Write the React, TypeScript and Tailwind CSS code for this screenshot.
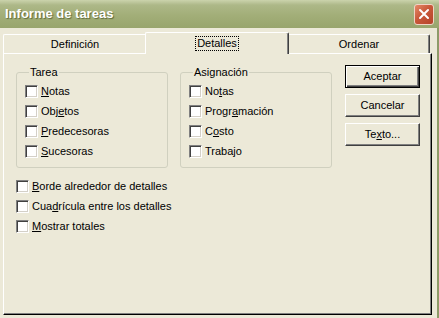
import React from 'react';

const font = "font-['Liberation_Sans',Tahoma,sans-serif]";

const Check: React.FC<{ children: React.ReactNode }> = ({ children }) => (
  <div className="flex h-[20px] items-center">
    <span className="box-border h-[13px] w-[13px] shrink-0 border border-t-[#808080] border-l-[#808080] border-r-white border-b-white bg-white shadow-[inset_1px_1px_0_#404040,inset_-1px_-1px_0_#d4d0c8]" />
    <span className="ml-[3px] text-[11px] leading-[13px] text-black">{children}</span>
  </div>
);

const Group: React.FC<{ title: string; children: React.ReactNode }> = ({ title, children }) => (
  <fieldset className="box-border h-[102px] w-[152px] rounded-[3px] border border-[#d0d0bf] pl-[8px] pt-[2px]">
    <legend className="ml-[4px] px-[1px] text-[11px] leading-[13px] text-black">{title}</legend>
    {children}
  </fieldset>
);

const Button: React.FC<{ children: React.ReactNode; primary?: boolean }> = ({ children, primary }) => (
  <div
    className={
      primary
        ? 'box-border flex h-[23px] w-[75px] items-center justify-center border border-black bg-[#ece9d8] text-[11px] shadow-[inset_1px_1px_0_#fff,inset_-1px_-1px_0_#404040,inset_-2px_-2px_0_#808080]'
        : 'box-border flex h-[23px] w-[75px] items-center justify-center border border-t-white border-l-white border-r-[#404040] border-b-[#404040] bg-[#ece9d8] text-[11px] shadow-[inset_-1px_-1px_0_#808080]'
    }
  >
    {children}
  </div>
);

export default function App() {
  return (
    <div className={`flex h-[318px] w-[439px] flex-col overflow-hidden bg-[#ece9d8] ${font}`}>
      {/* title bar */}
      <div className="flex h-[28px] shrink-0 items-center bg-[linear-gradient(to_bottom,#cbd3ac_0%,#adb888_18%,#a2ae78_55%,#98a56d_100%)] pl-[5px] pr-[5px]">
        <span className="text-[13px] font-bold text-white [text-shadow:1px_1px_1px_#5d6b3a]">Informe de tareas</span>
        <div className="ml-auto flex h-[21px] w-[20px] items-center justify-center rounded-[3px] border border-[#efd3c5] bg-[linear-gradient(135deg,#e58a68_0%,#c9583a_45%,#b5432a_100%)]">
          <svg width="12" height="12" viewBox="0 0 12 12">
            <path d="M2 2 L10 10 M10 2 L2 10" stroke="#fff" strokeWidth="2" strokeLinecap="round" />
          </svg>
        </div>
      </div>

      <div className="flex flex-1 flex-col border-r-2 border-[#8e9b68] pl-[3px] pr-[5px]">
        {/* tabs */}
        <div className="mt-[4px] flex h-[21px] items-end text-[11px] text-black">
          <div className="box-border flex h-[19px] w-[142px] items-center justify-center rounded-tl-[2px] border-t border-l border-white pl-px">
            Definición
          </div>
          <div className="relative z-10 -mb-px box-border flex h-[22px] w-[144px] items-center justify-center rounded-t-[2px] border-t border-l border-r border-t-white border-l-white border-r-[#404040] bg-[#ece9d8] shadow-[inset_-1px_0_0_#808080]">
            <span className="px-px leading-[13px] outline outline-1 outline-dotted outline-black">Detalles</span>
          </div>
          <div className="box-border flex h-[19px] w-[141px] items-center justify-center rounded-tr-[2px] border-t border-r border-t-white border-r-[#404040] shadow-[inset_-1px_0_0_#808080]">
            Ordenar
          </div>
        </div>

        {/* panel */}
        <div className="mb-[3px] box-border flex-1 border border-t-white border-l-white border-r-black border-b-black pl-[12px] pt-[12px] shadow-[inset_-1px_-1px_0_#808080]">
          <div className="flex items-start">
            <Group title="Tarea">
              <Check><u>N</u>otas</Check>
              <Check>Obj<u>e</u>tos</Check>
              <Check><u>P</u>redecesoras</Check>
              <Check><u>S</u>ucesoras</Check>
            </Group>
            <div className="ml-[12px]">
              <Group title="Asignación">
                <Check>No<u>t</u>as</Check>
                <Check>Progr<u>a</u>mación</Check>
                <Check>C<u>o</u>sto</Check>
                <Check>Traba<u>j</u>o</Check>
              </Group>
            </div>
            <div className="-mt-px ml-[13px] flex flex-col gap-[6px] text-black">
              <Button primary>Aceptar</Button>
              <Button>Cancelar</Button>
              <Button>Te<u>x</u>to...</Button>
            </div>
          </div>
          <div className="mt-[8px]">
            <Check><u>B</u>orde alrededor de detalles</Check>
            <Check>Cua<u>d</u>rícula entre los detalles</Check>
            <Check><u>M</u>ostrar totales</Check>
          </div>
        </div>
      </div>
    </div>
  );
}
